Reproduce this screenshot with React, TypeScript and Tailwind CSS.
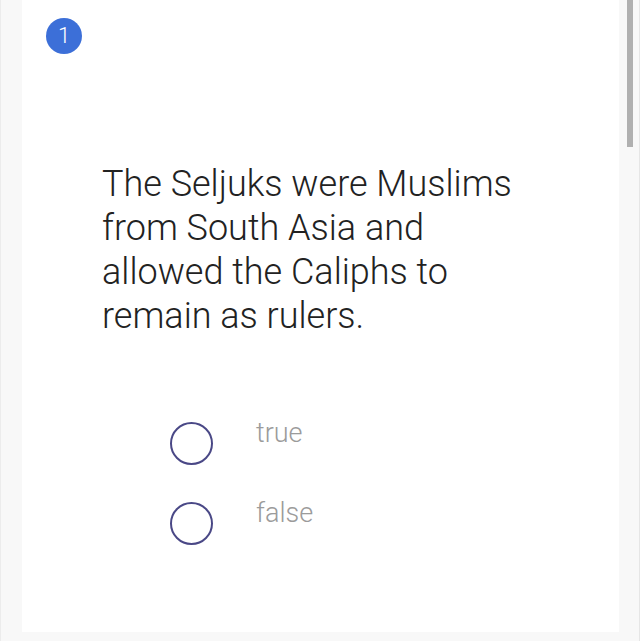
import React, { useState } from 'react';

const options = ['true', 'false'];

export default function App() {
    const [picked, setPicked] = useState<string | null>(null);

    return (
        <div className="w-[640px] h-[641px] bg-[#f8f8f8] flex overflow-hidden font-['Roboto',sans-serif]">
            {/* left gutter */}
            <div className="w-[22px] h-full border-l border-[#ececec]" />

            {/* Question card */}
            <div className="w-[597px] h-[632px] bg-white flex flex-col">
                <div className="pl-[24px] pt-[18px]">
                    <div className="w-[36px] h-[36px] rounded-full bg-[#3c6fd8] flex items-center justify-center text-white text-[22px] font-light leading-none">
                        1
                    </div>
                </div>

                <p className="mt-[108px] ml-[80px] w-[420px] text-[36px] leading-[44px] font-light text-[#222222]">
                    The Seljuks were Muslims from South Asia and allowed the Caliphs to remain as rulers.
                </p>

                <div className="mt-[84px] ml-[148px] flex flex-col gap-[37px]">
                    {options.map(opt => (
                        <button
                            key={opt}
                            onClick={() => setPicked(opt)}
                            className="flex items-center gap-[43px] text-left"
                        >
                            <span className="w-[43px] h-[43px] rounded-full border-2 border-[#4a4886] flex items-center justify-center">
                                {picked === opt && <span className="w-[23px] h-[23px] rounded-full bg-[#4a4886]" />}
                            </span>
                            <span className="text-[27px] font-light text-[#9b9b9b] leading-none -mt-[20px]">{opt}</span>
                        </button>
                    ))}
                </div>
            </div>

            {/* scrollbar */}
            <div className="w-[21px] h-full flex border-r border-[#e6e6e6]">
                <div className="ml-[8px] w-[6px] h-[147px] bg-[#b0b0b0]" />
            </div>
        </div>
    );
}
